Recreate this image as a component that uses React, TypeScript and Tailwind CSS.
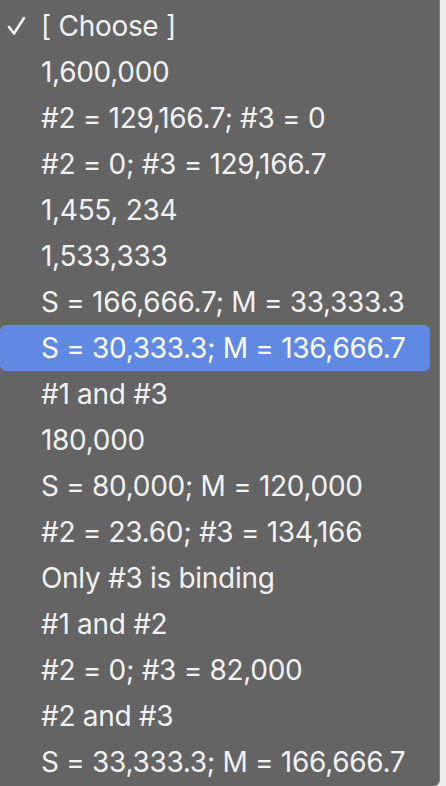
import React from 'react';

const options = [
    '[ Choose ]',
    '1,600,000',
    '#2 = 129,166.7; #3 = 0',
    '#2 = 0; #3 = 129,166.7',
    '1,455, 234',
    '1,533,333',
    'S = 166,666.7; M = 33,333.3',
    'S = 30,333.3; M = 136,666.7',
    '#1 and #3',
    '180,000',
    'S = 80,000; M = 120,000',
    '#2 = 23.60; #3 = 134,166',
    'Only #3 is binding',
    '#1 and #2',
    '#2 = 0; #3 = 82,000',
    '#2 and #3',
    'S = 33,333.3; M = 166,666.7',
]

const Check = () => (
    <svg width="19" height="20" viewBox="0 0 19 20" fill="none">
        <path d="M2 11 L7 17.5 L17 2" stroke="#f2f2f2" strokeWidth="2.6" strokeLinecap="round" strokeLinejoin="round"/>
    </svg>
)

const App = () => {
    const selected = 0
    const hovered = 7

    return (
        <div className="w-[446px] h-[786px] flex bg-[#ececec] overflow-hidden" style={{fontFamily: 'Inter, "Noto Sans", sans-serif'}}>
            <div className="w-[440px] h-full bg-[#646464] border-r border-[#808080] rounded-br-[6px] pt-[3px]">
                {options.map((label, i) => (
                    <div
                        key={label}
                        className={`h-[46px] mr-[9px] flex items-center rounded-[6px] text-[28px] tracking-[-0.3px] text-[#f2f2f2] ${i === hovered ? 'bg-[#5f89e3] text-white' : ''}`}
                    >
                        <span className="w-[41px] flex justify-start pl-[7px] pb-[1px]">
                            {i === selected && <Check/>}
                        </span>
                        <span className="whitespace-nowrap">{label}</span>
                    </div>
                ))}
            </div>
        </div>
    )
}
export default App;
